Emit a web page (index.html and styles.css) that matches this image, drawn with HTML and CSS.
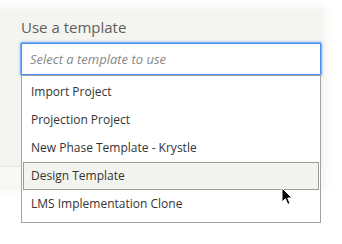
FILE: index.html
```html
<!DOCTYPE html>
<html lang="en">
<head>
  <meta charset="UTF-8">
  <meta name="viewport" content="width=device-width, initial-scale=1">
  <title>Use a template</title>
  <link rel="stylesheet" href="styles.css">
</head>
<body>
  <div class="card">
    <div class="card-body">
      <label class="field-label" for="templateInput">Use a template</label>
      <div class="field">
        <input type="text" id="templateInput" class="field-input" placeholder="Select a template to use">
        <ul class="dropdown">
          <li class="dropdown-item">Import Project</li>
          <li class="dropdown-item">Projection Project</li>
          <li class="dropdown-item">New Phase Template - Krystle</li>
          <li class="dropdown-item active">Design Template</li>
          <li class="dropdown-item">LMS Implementation Clone</li>
        </ul>
        <svg class="cursor" width="13" height="19" viewBox="0 0 13 19">
          <path d="M1 1 L1 15 L4.4 11.8 L6.8 17.4 L9 16.4 L6.7 11 L11 11 Z" fill="#000" stroke="#fff" stroke-width="1" stroke-linejoin="round"/>
        </svg>
      </div>
    </div>
    <div class="card-foot"></div>
  </div>
</body>
</html>
```

FILE: styles.css
```css
html, body {
  height: 100%;
}
body {
  margin: 0;
  padding: 0;
  background-color: #ffffff;
  font-family: "Open Sans", "DejaVu Sans", sans-serif;
}
.card {
  margin: 10px 20px 0 -14px;
  background-color: #f4f4f1;
  box-shadow: 0 0 8px 4px #f4f4f1;
}
.card-body {
  padding: 6px 1px 91px 35px;
}
.card-foot {
  height: 19px;
  border-top: 1px solid #e4e4e0;
  background-color: #f8f8f6;
}
.field-label {
  display: block;
  font-size: 15px;
  line-height: 22px;
  color: #606060;
  margin-bottom: 5px;
}
.field {
  position: relative;
}
.field-input {
  display: block;
  box-sizing: border-box;
  width: 100%;
  height: 32px;
  margin: 0;
  padding: 0 8px;
  border: 1px solid #4a8ef0;
  border-radius: 1px;
  box-shadow: 0 0 0 1px #7fb0f5, 0 0 3px 1px rgba(77, 144, 254, 0.5);
  background: #ffffff;
  font-family: inherit;
  font-size: 13px;
  outline: none;
}
.field-input::placeholder {
  font-style: italic;
  color: #888888;
}
.dropdown {
  position: absolute;
  top: 100%;
  left: 0;
  right: 0;
  margin: 0;
  padding: 2px 1px 4px;
  list-style: none;
  background: #ffffff;
  border: 1px solid #a3a3a3;
}
.dropdown-item {
  box-sizing: border-box;
  height: 28px;
  line-height: 28px;
  padding: 0 8px;
  font-size: 12px;
  color: #333333;
  white-space: nowrap;
}
.dropdown-item.active {
  background-color: #f3f3ef;
  border: 1px solid #9a9a9a;
  line-height: 26px;
  padding: 0 7px;
}
.cursor {
  position: absolute;
  left: 260px;
  top: 144px;
}
```
